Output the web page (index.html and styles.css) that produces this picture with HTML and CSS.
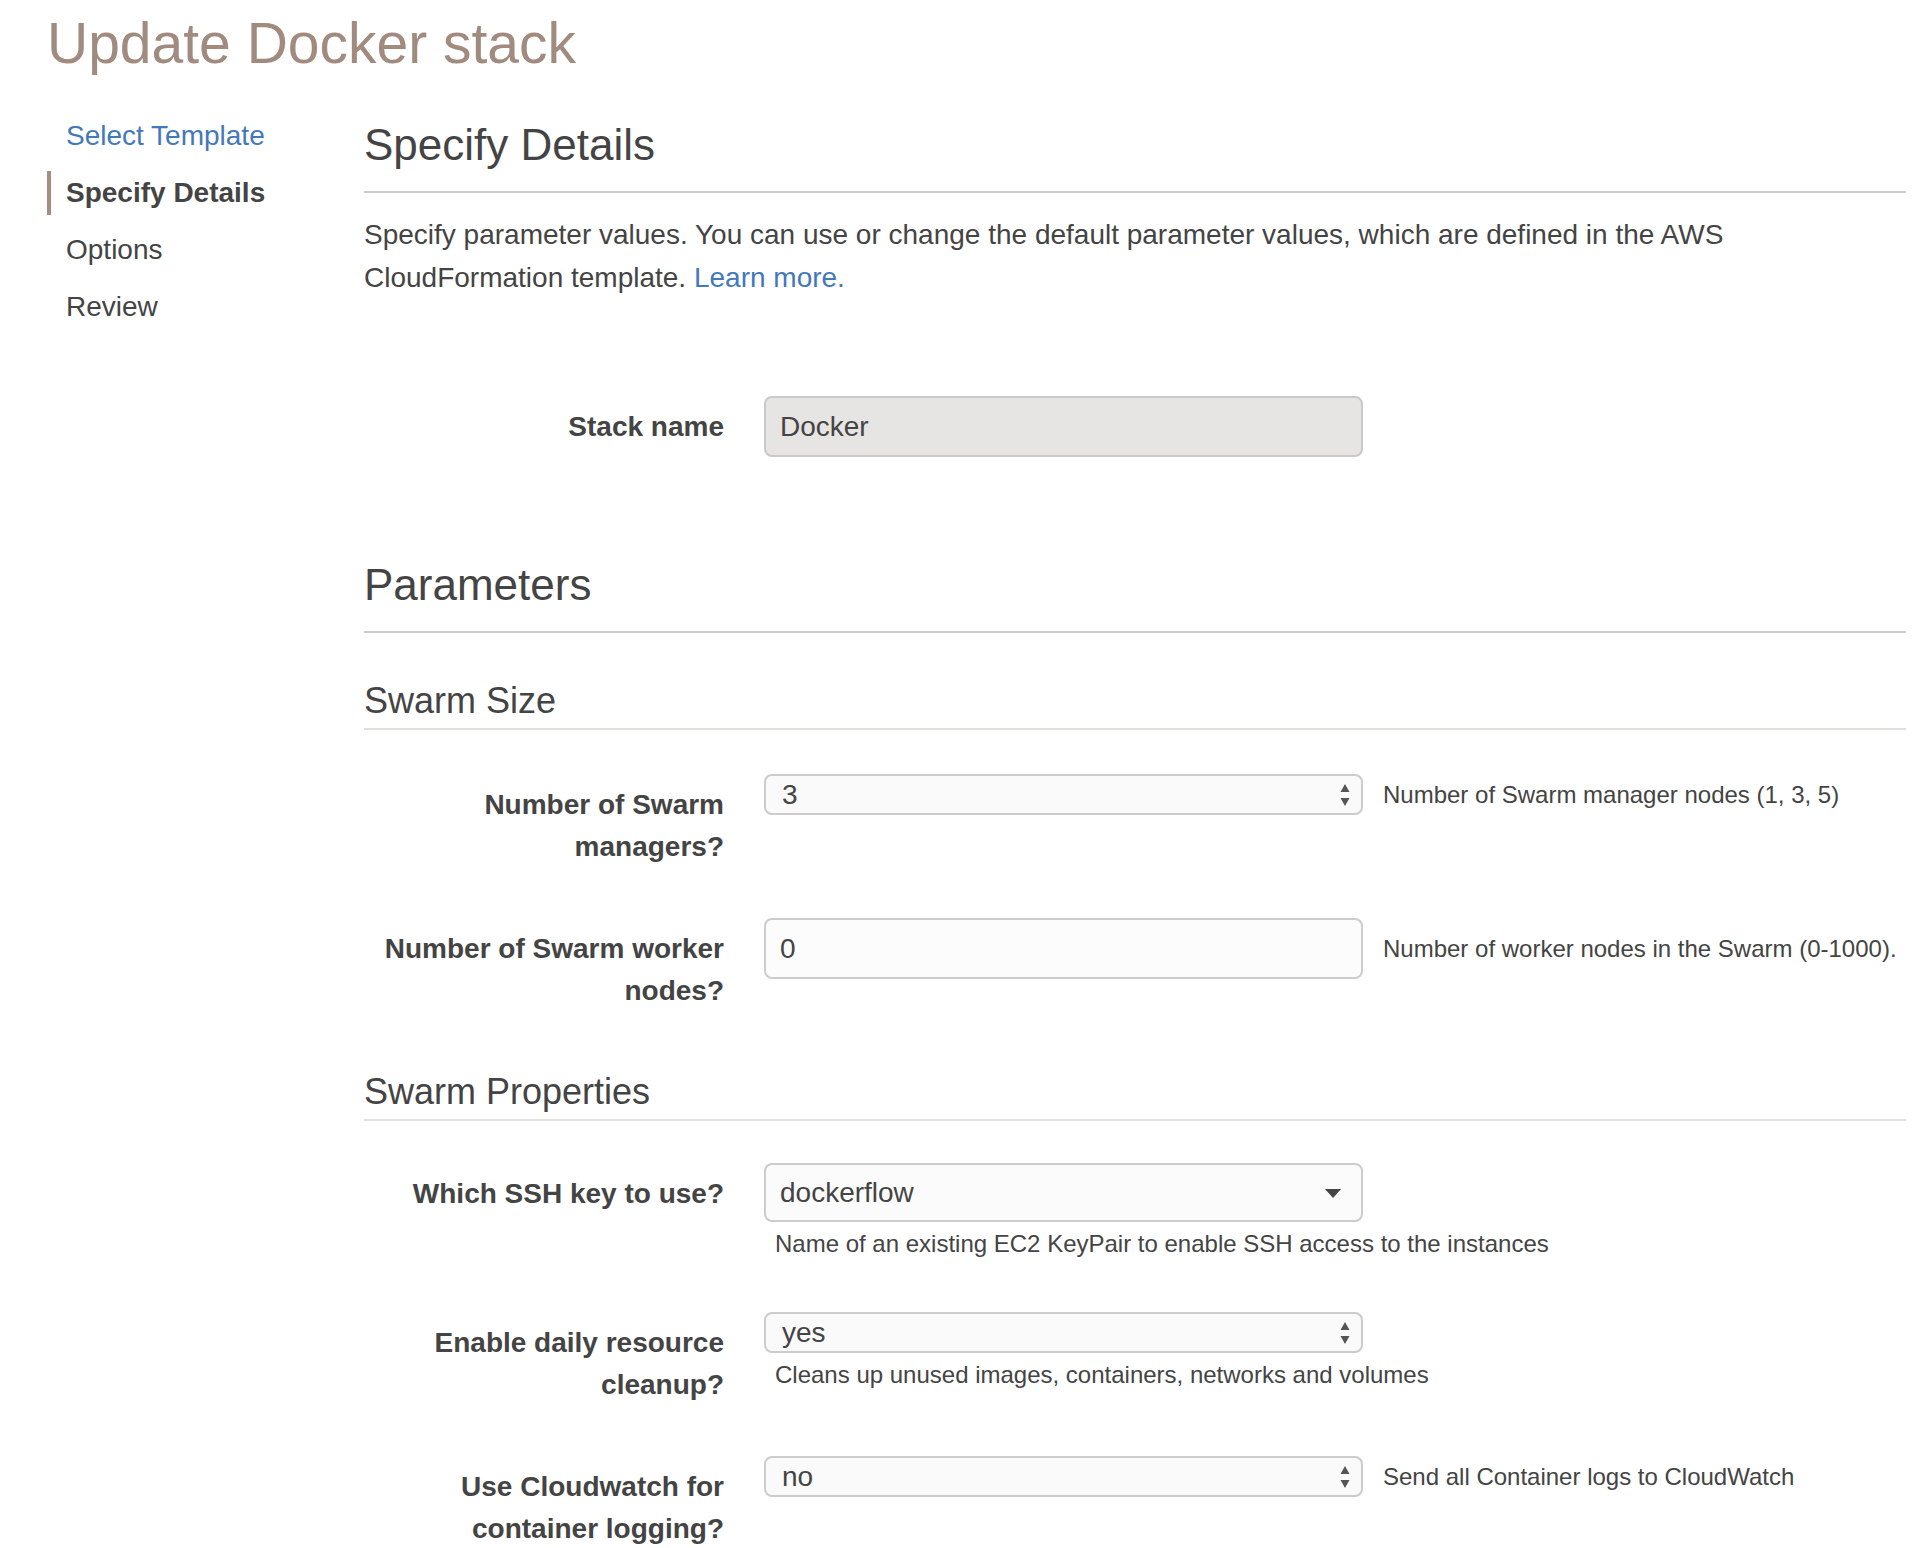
FILE: index.html
```html
<!DOCTYPE html>
<html lang="en">
<head>
<meta charset="utf-8">
<title>Update Docker stack</title>
<link rel="stylesheet" href="styles.css">
</head>
<body>
<div class="page">
  <h1 class="page-title">Update Docker stack</h1>
  <div class="layout">
    <nav class="steps">
      <a class="step step-link">Select Template</a>
      <span class="step step-active">Specify Details</span>
      <span class="step">Options</span>
      <span class="step">Review</span>
    </nav>
    <main class="main">
      <h2 class="section-title">Specify Details</h2>
      <p class="intro">Specify parameter values. You can use or change the default parameter values, which are defined in the AWS CloudFormation template. <span class="link">Learn more.</span></p>

      <div class="field">
        <div class="field-label">Stack name</div>
        <div class="field-body">
          <div class="control-line">
            <div class="input input-disabled">Docker</div>
          </div>
        </div>
      </div>

      <h2 class="section-title section-params">Parameters</h2>
      <h3 class="group-title">Swarm Size</h3>

      <div class="field">
        <div class="field-label">Number of Swarm managers?</div>
        <div class="field-body">
          <div class="control-line">
            <div class="input select-small">3
              <svg class="stepper" width="10" height="22" viewBox="0 0 10 22"><path d="M5 0 L9.5 8 L0.5 8 Z" fill="#555"/><path d="M0.5 14 L9.5 14 L5 22 Z" fill="#555"/></svg>
            </div>
            <span class="hint-side">Number of Swarm manager nodes (1, 3, 5)</span>
          </div>
        </div>
      </div>

      <div class="field">
        <div class="field-label">Number of Swarm worker nodes?</div>
        <div class="field-body">
          <div class="control-line">
            <div class="input">0</div>
            <span class="hint-side">Number of worker nodes in the Swarm (0-1000).</span>
          </div>
        </div>
      </div>

      <h3 class="group-title group-props">Swarm Properties</h3>

      <div class="field">
        <div class="field-label">Which SSH key to use?</div>
        <div class="field-body">
          <div class="control-line">
            <div class="input select-large">dockerflow
              <svg class="caret" width="16" height="9" viewBox="0 0 16 9"><path d="M0 0 L16 0 L8 9 Z" fill="#444"/></svg>
            </div>
          </div>
          <div class="hint-below">Name of an existing EC2 KeyPair to enable SSH access to the instances</div>
        </div>
      </div>

      <div class="field">
        <div class="field-label">Enable daily resource cleanup?</div>
        <div class="field-body">
          <div class="control-line">
            <div class="input select-small">yes
              <svg class="stepper" width="10" height="22" viewBox="0 0 10 22"><path d="M5 0 L9.5 8 L0.5 8 Z" fill="#555"/><path d="M0.5 14 L9.5 14 L5 22 Z" fill="#555"/></svg>
            </div>
          </div>
          <div class="hint-below">Cleans up unused images, containers, networks and volumes</div>
        </div>
      </div>

      <div class="field">
        <div class="field-label">Use Cloudwatch for container logging?</div>
        <div class="field-body">
          <div class="control-line">
            <div class="input select-small">no
              <svg class="stepper" width="10" height="22" viewBox="0 0 10 22"><path d="M5 0 L9.5 8 L0.5 8 Z" fill="#555"/><path d="M0.5 14 L9.5 14 L5 22 Z" fill="#555"/></svg>
            </div>
            <span class="hint-side">Send all Container logs to CloudWatch</span>
          </div>
        </div>
      </div>
    </main>
  </div>
</div>
</body>
</html>
```

FILE: styles.css
```css
html, body {
  margin: 0;
  padding: 0;
  background: #ffffff;
}

body {
  font-family: "Liberation Sans", Arial, Helvetica, sans-serif;
  color: #444444;
}

.page {
  padding: 12px 16px 0 47px;
}

.page-title {
  margin: 0;
  font-size: 57px;
  line-height: 63px;
  font-weight: normal;
  color: #a08b7e;
}

.layout {
  display: flex;
  align-items: flex-start;
}

.steps {
  width: 317px;
  flex-shrink: 0;
  padding-top: 39px;
  display: flex;
  flex-direction: column;
  gap: 13px;
}

.step {
  display: block;
  font-size: 28px;
  line-height: 44px;
  padding-left: 19px;
  color: #444444;
}

.step-link {
  color: #4378bb;
}

.step-active {
  font-weight: bold;
  border-left: 4px solid #a58d7f;
  padding-left: 15px;
}

.main {
  width: 1542px;
  flex-shrink: 0;
  padding-top: 46px;
}

.section-title {
  margin: 0;
  font-size: 44px;
  line-height: 48px;
  font-weight: normal;
  color: #444444;
  padding-bottom: 22px;
  border-bottom: 2px solid #cccccc;
}

.section-params {
  margin-top: 104px;
}

.intro {
  margin: 20px 0 97px;
  font-size: 28px;
  line-height: 43px;
}

.link {
  color: #4378bb;
}

.group-title {
  margin: 59px 0 44px;
  font-size: 36px;
  line-height: 40px;
  font-weight: normal;
  color: #444444;
  padding-bottom: 7px;
  border-bottom: 2px solid #e1e0dc;
}

.section-title + .group-title {
  margin-top: 48px;
}

.group-props {
  margin-top: 60px;
  margin-bottom: 42px;
}

.field {
  display: flex;
  align-items: flex-start;
  margin-bottom: 50px;
}

.field-label {
  width: 360px;
  flex-shrink: 0;
  margin-right: 40px;
  text-align: right;
  font-weight: bold;
  font-size: 28px;
  line-height: 42px;
  padding-top: 10px;
  color: #444444;
}

.field-body {
  display: flex;
  flex-direction: column;
}

.control-line {
  display: flex;
  align-items: center;
}

.input {
  position: relative;
  box-sizing: border-box;
  width: 599px;
  height: 61px;
  border: 2px solid #cccccc;
  border-radius: 8px;
  background: #fcfcfc;
  padding: 0 14px;
  font-size: 28px;
  display: flex;
  align-items: center;
  color: #444444;
}

.input-disabled {
  background: #e6e5e3;
  border-color: #c9c9c9;
}

.select-small {
  height: 41px;
  background: #fafafa;
  padding-left: 16px;
}

.select-large {
  height: 59px;
  background: #fbfbfb;
}

.stepper {
  position: absolute;
  right: 11px;
  top: 8px;
}

.caret {
  position: absolute;
  right: 20px;
  top: 24px;
}

.hint-side {
  margin-left: 20px;
  font-size: 24px;
  line-height: 36px;
  white-space: nowrap;
  color: #444444;
}

.hint-below {
  margin-top: 4px;
  padding-left: 11px;
  font-size: 24px;
  line-height: 36px;
  white-space: nowrap;
  color: #444444;
}
```
